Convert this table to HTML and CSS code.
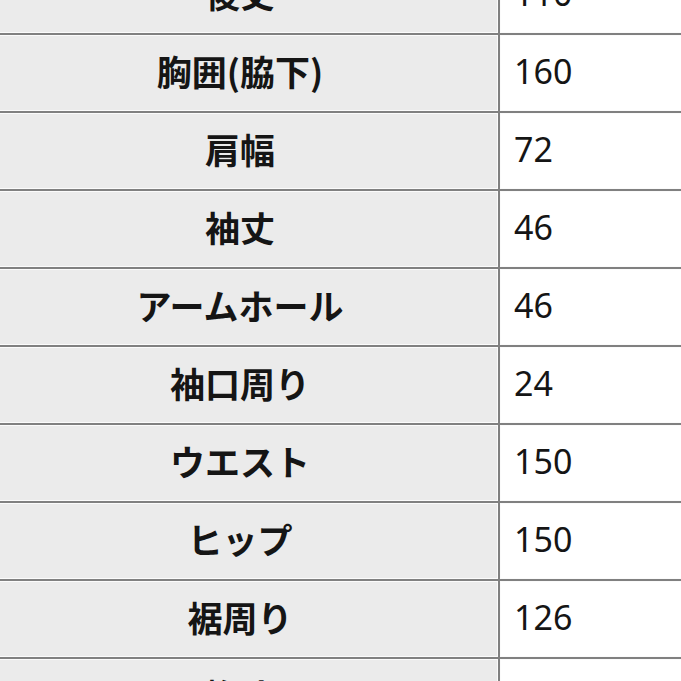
FILE: index.html
```html
<!DOCTYPE html>
<html lang="ja">
<head>
<meta charset="utf-8">
<link rel="stylesheet" href="styles.css">
</head>
<body>
<div class="table">
  <div class="th">後丈</div><div class="td">110</div>
  <div class="th">胸囲(脇下)</div><div class="td">160</div>
  <div class="th">肩幅</div><div class="td">72</div>
  <div class="th">袖丈</div><div class="td">46</div>
  <div class="th">アームホール</div><div class="td">46</div>
  <div class="th">袖口周り</div><div class="td">24</div>
  <div class="th">ウエスト</div><div class="td">150</div>
  <div class="th">ヒップ</div><div class="td">150</div>
  <div class="th">裾周り</div><div class="td">126</div>
  <div class="th">裄丈</div><div class="td">82</div>
</div>
</body>
</html>
```
FILE: styles.css
```css
html, body {
  margin: 0;
  padding: 0;
  background: #fff;
  overflow: hidden;
  width: 681px;
  height: 681px;
}
.table {
  display: grid;
  grid-template-columns: 516px 220px;
  grid-auto-rows: 76px;
  gap: 2px;
  background: #808080;
  margin-top: -43px;
  margin-left: -18px;
  font-family: "Noto Sans", "Noto Sans CJK JP", sans-serif;
  font-size: 34px;
  color: #151515;
}
.th, .td {
  box-sizing: border-box;
  border: 1px solid #fbfbfb;
  display: flex;
  align-items: center;
  padding-bottom: 5px;
}
.th {
  background: #ebebeb;
  justify-content: center;
  font-weight: 700;
  font-size: 35px;
  font-family: "Noto Sans CJK JP", sans-serif;
}
.td {
  background: #fff;
  padding-left: 13px;
}
```
